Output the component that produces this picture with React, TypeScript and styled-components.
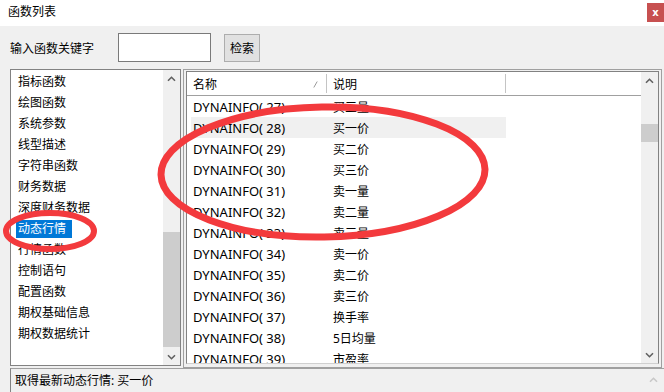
import React from 'react';
import styled, { createGlobalStyle } from 'styled-components';

const GlobalStyle = createGlobalStyle`
  html, body {
    margin: 0;
    padding: 0;
    background: #f0f0f0;
  }
  body {
    font-family: "Noto Sans", "Noto Sans CJK SC", sans-serif;
    font-size: 12px;
    color: #000;
  }
`;

const Window = styled.div`
  position: relative;
  width: 664px;
  height: 392px;
  background: #f0f0f0;
  display: flex;
  flex-direction: column;
  overflow: hidden;
`;

const TitleBar = styled.div`
  height: 26px;
  flex-shrink: 0;
  background: #fff;
  display: flex;
  align-items: flex-start;
`;

const Title = styled.div`
  padding-left: 8px;
  line-height: 24px;
`;

const CloseButton = styled.div`
  margin-left: auto;
  margin-top: 3px;
  width: 17px;
  height: 19px;
  background: #c75050;
  color: #fff;
  font-family: "DejaVu Sans", sans-serif;
  font-weight: bold;
  font-size: 10px;
  display: flex;
  align-items: center;
  justify-content: center;
`;

const SearchRow = styled.div`
  display: flex;
  align-items: center;
  height: 29px;
  margin-top: 7px;
  padding-left: 10px;
`;

const Label = styled.div`
  width: 108px;
`;

const SearchInput = styled.div`
  box-sizing: border-box;
  width: 93px;
  height: 29px;
  background: #fff;
  border: 1px solid #7a7a7a;
`;

const SearchButton = styled.div`
  box-sizing: border-box;
  margin-left: 13px;
  width: 36px;
  height: 28px;
  margin-top: 1px;
  border: 1px solid #adadad;
  background: #e1e1e1;
  display: flex;
  align-items: center;
  justify-content: center;
`;

const Main = styled.div`
  display: flex;
  align-items: flex-start;
  margin-top: 7px;
  height: 299px;
  flex-shrink: 0;
`;

const LeftList = styled.div`
  box-sizing: border-box;
  margin-left: 10px;
  width: 171px;
  height: 297px;
  border: 1px solid #828282;
  background: #fff;
  display: flex;
`;

const CategoryColumn = styled.div`
  flex: 1;
  padding-top: 1px;
`;

const CategoryRow = styled.div`
  height: 21px;
  display: flex;
  align-items: center;
  padding-left: 5px;
`;

const CategoryText = styled.span<{ $selected?: boolean }>`
  display: inline-block;
  line-height: 18px;
  padding: 0 6px 0 2px;
  background: ${p => (p.$selected ? '#0078d7' : 'transparent')};
  color: ${p => (p.$selected ? '#fff' : '#000')};
`;

const ScrollBar = styled.div`
  width: 17px;
  flex-shrink: 0;
  background: #f0f0f0;
  display: flex;
  flex-direction: column;
`;

const ArrowBox = styled.div`
  height: 17px;
  flex-shrink: 0;
  display: flex;
  align-items: center;
  justify-content: center;
`;

const Track = styled.div`
  flex: 1;
  display: flex;
  flex-direction: column;
`;

const Thumb = styled.div<{ $top: number; $height: number }>`
  margin-top: ${p => p.$top}px;
  height: ${p => p.$height}px;
  background: #cdcdcd;
`;

const RightFrame = styled.div`
  box-sizing: border-box;
  margin-left: 2px;
  width: 479px;
  height: 299px;
  border: 1px solid #a0a0a0;
  padding: 1px 2px 3px 2px;
  display: flex;
`;

const ListView = styled.div`
  flex: 1;
  border: 1px solid #828282;
  border-bottom-color: #d0d0d0;
  background: #fff;
  display: flex;
  overflow: hidden;
`;

const ListBody = styled.div`
  flex: 1;
  display: flex;
  flex-direction: column;
  overflow: hidden;
`;

const Header = styled.div`
  height: 23px;
  flex-shrink: 0;
  border-bottom: 1px solid #a0a0a0;
  display: flex;
`;

const HeaderCell = styled.div<{ $width: number }>`
  position: relative;
  box-sizing: border-box;
  width: ${p => p.$width}px;
  padding-left: 6px;
  display: flex;
  align-items: center;
  &::after {
    content: '';
    position: absolute;
    right: 0;
    top: 2px;
    bottom: 2px;
    width: 1px;
    background: #c4c4c4;
  }
`;

const SortMark = styled.svg`
  margin-left: auto;
  margin-right: 9px;
  margin-top: 1px;
`;

const Row = styled.div<{ $active?: boolean }>`
  height: 21px;
  flex-shrink: 0;
  width: 315px;
  margin-left: 4px;
  display: flex;
  align-items: center;
  background: ${p => (p.$active ? '#f0f0f0' : 'transparent')};
`;

const NameCell = styled.div`
  width: 136px;
  padding-left: 2px;
  box-sizing: border-box;
  font-size: 13px;
`;

const DescCell = styled.div`
  padding-left: 6px;
`;

const StatusBar = styled.div`
  flex: 1;
  margin-left: 10px;
  border-left: 1px solid #828282;
  border-top: 1px solid #a0a0a0;
  display: flex;
`;

const StatusText = styled.div`
  flex: 1;
  padding-left: 4px;
  padding-top: 3px;
  line-height: 18px;
`;

const StatusScroll = styled.div`
  width: 21px;
  display: flex;
  justify-content: center;
  padding-top: 8px;
`;

const Annotation = styled.svg`
  position: absolute;
  left: 0;
  top: 0;
  pointer-events: none;
`;

const Chevron = ({ down, color = '#606060' }: { down?: boolean; color?: string }) => (
  <svg width="9" height="6" viewBox="0 0 9 6">
    <path
      d={down ? 'M1 1.2 L4.5 4.7 L8 1.2' : 'M1 4.8 L4.5 1.3 L8 4.8'}
      fill="none"
      stroke={color}
      strokeWidth="1.6"
    />
  </svg>
);

const categories = [
  '指标函数',
  '绘图函数',
  '系统参数',
  '线型描述',
  '字符串函数',
  '财务数据',
  '深度财务数据',
  '动态行情',
  '行情函数',
  '控制语句',
  '配置函数',
  '期权基础信息',
  '期权数据统计',
];

const functions = [
  ['DYNAINFO( 27)', '买三量'],
  ['DYNAINFO( 28)', '买一价'],
  ['DYNAINFO( 29)', '买二价'],
  ['DYNAINFO( 30)', '买三价'],
  ['DYNAINFO( 31)', '卖一量'],
  ['DYNAINFO( 32)', '卖二量'],
  ['DYNAINFO( 33)', '卖三量'],
  ['DYNAINFO( 34)', '卖一价'],
  ['DYNAINFO( 35)', '卖二价'],
  ['DYNAINFO( 36)', '卖三价'],
  ['DYNAINFO( 37)', '换手率'],
  ['DYNAINFO( 38)', '5日均量'],
  ['DYNAINFO( 39)', '市盈率'],
];

const App = () => {
  return (
    <>
      <GlobalStyle />
      <Window>
        <TitleBar>
          <Title>函数列表</Title>
          <CloseButton>x</CloseButton>
        </TitleBar>

        <SearchRow>
          <Label>输入函数关键字</Label>
          <SearchInput />
          <SearchButton>检索</SearchButton>
        </SearchRow>

        <Main>
          <LeftList>
            <CategoryColumn>
              {categories.map(c => (
                <CategoryRow key={c}>
                  <CategoryText $selected={c === '动态行情'}>{c}</CategoryText>
                </CategoryRow>
              ))}
            </CategoryColumn>
            <ScrollBar>
              <ArrowBox>
                <Chevron />
              </ArrowBox>
              <Track>
                <Thumb $top={145} $height={115} />
              </Track>
              <ArrowBox>
                <Chevron down />
              </ArrowBox>
            </ScrollBar>
          </LeftList>

          <RightFrame>
            <ListView>
              <ListBody>
                <Header>
                  <HeaderCell $width={140}>
                    名称
                    <SortMark width="5" height="7" viewBox="0 0 5 7">
                      <path d="M0.8 6.5 L4.2 0.5" stroke="#9a9a9a" strokeWidth="1" />
                    </SortMark>
                  </HeaderCell>
                  <HeaderCell $width={179}>说明</HeaderCell>
                </Header>
                {functions.map(([name, desc]) => (
                  <Row key={name} $active={name === 'DYNAINFO( 28)'}>
                    <NameCell>{name}</NameCell>
                    <DescCell>{desc}</DescCell>
                  </Row>
                ))}
              </ListBody>
              <ScrollBar>
                <ArrowBox>
                  <Chevron />
                </ArrowBox>
                <Track>
                  <Thumb $top={35} $height={18} />
                </Track>
                <ArrowBox>
                  <Chevron down />
                </ArrowBox>
              </ScrollBar>
            </ListView>
          </RightFrame>
        </Main>

        <StatusBar>
          <StatusText>取得最新动态行情: 买一价</StatusText>
          <StatusScroll>
            <Chevron color="#c8c8c8" />
          </StatusScroll>
        </StatusBar>

        <Annotation width="664" height="392" viewBox="0 0 664 392">
          <ellipse
            cx="323"
            cy="172"
            rx="162"
            ry="65"
            transform="rotate(-1 323 172)"
            fill="none"
            stroke="#f33a3d"
            strokeWidth="7"
          />
          <ellipse cx="50" cy="231" rx="44" ry="18" fill="none" stroke="#f33a3d" strokeWidth="6" />
        </Annotation>
      </Window>
    </>
  );
};

export default App;
